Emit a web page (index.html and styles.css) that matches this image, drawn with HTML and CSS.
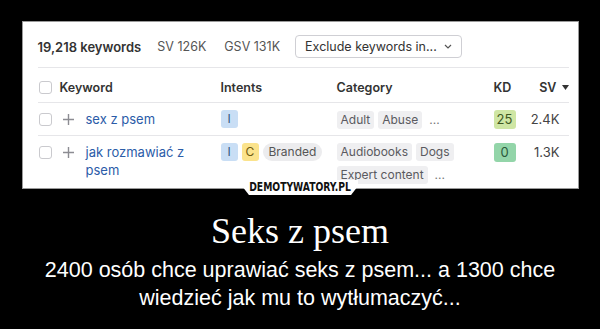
FILE: index.html
```html
<!DOCTYPE html>
<html lang="pl">
<head>
<meta charset="utf-8">
<title>Seks z psem</title>
<link rel="stylesheet" href="styles.css">
</head>
<body>
<div class="poster">
  <div class="picture">
    <div class="frame">
      <div class="toolbar">
        <span class="count">19,218 keywords</span>
        <span class="stat">SV 126K</span>
        <span class="stat">GSV 131K</span>
        <span class="select">Exclude keywords in...
          <svg class="chev" width="8" height="5" viewBox="0 0 8 5"><path d="M1 1l3 3 3-3" fill="none" stroke="#555" stroke-width="1.2"/></svg>
        </span>
      </div>
      <div class="table">
        <div class="row head">
          <span class="cb"></span>
          <span class="col-kw">Keyword</span>
          <span>Intents</span>
          <span>Category</span>
          <span>KD</span>
          <span class="col-sv">SV <svg width="7" height="5" viewBox="0 0 7 5"><path d="M0 0h7L3.5 5z" fill="#333"/></svg></span>
        </div>
        <div class="row">
          <span class="cb"></span>
          <span class="col-kw"><svg class="plus" width="11" height="11" viewBox="0 0 11 11"><path d="M5.5 0v11M0 5.5h11" stroke="#8c8c92" stroke-width="1.4"/></svg><a class="kw">sex z psem</a></span>
          <span class="tags"><b class="intent i">I</b></span>
          <span class="tags"><i class="chip">Adult</i><i class="chip">Abuse</i><i class="more">...</i></span>
          <span><b class="kd kd-mid">25</b></span>
          <span class="col-sv val">2.4K</span>
        </div>
        <div class="row">
          <span class="cb"></span>
          <span class="col-kw"><svg class="plus" width="11" height="11" viewBox="0 0 11 11"><path d="M5.5 0v11M0 5.5h11" stroke="#8c8c92" stroke-width="1.4"/></svg><a class="kw">jak rozmawiać z psem</a></span>
          <span class="tags"><b class="intent i">I</b><b class="intent c">C</b><i class="pill">Branded</i></span>
          <span class="tags"><i class="chip">Audiobooks</i><i class="chip">Dogs</i><i class="chip">Expert content</i><i class="more">...</i></span>
          <span><b class="kd kd-low">0</b></span>
          <span class="col-sv val">1.3K</span>
        </div>
      </div>
    </div>
    <div class="brand"><span class="brand-text">DEMOTYWATORY.PL</span></div>
  </div>
  <h1 class="title">Seks z psem</h1>
  <p class="sub">2400 osób chce uprawiać seks z psem... a 1300 chce wiedzieć jak mu to wytłumaczyć...</p>
</div>
</body>
</html>
```

FILE: styles.css
```css
* { box-sizing: border-box; }
html, body { margin: 0; padding: 0; background: #000; }
body { width: 600px; height: 329px; overflow: hidden; }

.poster {
  display: flex;
  flex-direction: column;
  align-items: center;
}

.picture {
  position: relative;
  margin-top: 21px;
  width: 557px;
  height: 168px;
}

.frame {
  width: 557px;
  height: 168px;
  background: #fff;
  border: 1px solid #9a9a9a;
  overflow: hidden;
  font-family: Inter, "Noto Sans", sans-serif;
  font-size: 12.5px;
  color: #333;
  padding: 0 9px 0 15px;
}

.toolbar {
  display: flex;
  align-items: center;
  height: 46px;
  padding-top: 4px;
  border-bottom: 1px solid #e6e6e9;
}
.count { font-weight: 600; color: #333; margin-right: 16px; font-size: 13px; }
.stat { color: #555; margin-right: 18px; font-size: 12.5px; }
.stat + .select { margin-left: -3px; }
.select {
  display: flex;
  align-items: center;
  gap: 7px;
  height: 23px;
  padding: 0 9px;
  border: 1px solid #cfcfd4;
  border-radius: 4px;
  font-size: 12.5px;
  color: #333;
}

.row {
  display: grid;
  grid-template-columns: 22px 161px 116px 157px 31px 44px;
  border-bottom: 1px solid #e6e6e9;
  padding: 7px 0 6px;
  align-items: start;
}
.row.head {
  padding: 12px 0 6px;
  font-weight: 600;
  line-height: 16px;
  color: #333;
}
.row.head .cb { margin-top: 1px; }
.row > span { line-height: 19px; }
.row.head > span { line-height: 16px; }

.cb {
  width: 13px;
  height: 13px;
  border: 1px solid #cacace;
  border-radius: 3px;
  margin-top: 3px;
  margin-left: 1px;
}

.col-kw { display: flex; align-items: flex-start; }
.plus { margin: 4px 12px 0 3px; flex: none; }
.kw { color: #2b5ca8; font-size: 13px; line-height: 18px; }

.tags { display: flex; flex-wrap: wrap; gap: 4px 4px; align-items: center; }
.intent {
  font-weight: 400;
  display: inline-block;
  width: 17px;
  height: 18px;
  line-height: 18px;
  text-align: center;
  border-radius: 3px;
  font-size: 12px;
}
.intent.i { background: #c9def5; color: #34527c; }
.intent.c { background: #fbe38c; color: #6f5a10; }
.pill {
  font-style: normal;
  background: #ececee;
  color: #555;
  border-radius: 9px;
  padding: 0 6px;
  height: 18px;
  line-height: 18px;
  font-size: 12px;
}
.chip {
  font-style: normal;
  background: #efeff1;
  color: #5a5a60;
  border-radius: 3px;
  padding: 0 4px;
  height: 18px;
  line-height: 18px;
  font-size: 12px;
}
.more { font-style: normal; color: #777; margin-left: 3px; font-size: 12px; }

.kd {
  font-weight: 400;
  display: inline-block;
  width: 22px;
  height: 19px;
  line-height: 19px;
  text-align: center;
  border-radius: 3px;
  font-size: 13px;
}
.kd-mid { background: #cfe6a4; color: #3e5722; }
.kd-low { background: #93d5a9; color: #2b5a3b; }

.col-sv { text-align: right; }
.col-sv svg { margin-left: 2px; vertical-align: 2px; }
.val { padding-right: 9px; font-size: 13px; color: #444; }

.brand {
  position: absolute;
  left: 50%;
  top: 159px;
  transform: translateX(-50%);
  width: 116px;
  height: 15px;
  background: #fff;
  clip-path: polygon(0 0, 100% 0, 100% 40%, 94% 100%, 6% 100%, 0 40%);
  display: flex;
  justify-content: center;
  align-items: flex-start;
}
.brand-text {
  display: inline-block;
  font-family: "DejaVu Sans Condensed", "DejaVu Sans", sans-serif;
  font-weight: bold;
  font-size: 12.5px;
  line-height: 14px;
  color: #111;
  white-space: nowrap;
  transform: scaleX(0.82);
}

.title {
  margin: 22px 0 0;
  font-family: "Liberation Serif", "Times New Roman", serif;
  font-weight: normal;
  font-size: 36px;
  line-height: 40px;
  color: #fff;
}
.sub {
  margin: 5px 0 0;
  width: 540px;
  font-family: "Liberation Sans", Arial, sans-serif;
  font-size: 21.5px;
  line-height: 28px;
  color: #fff;
  text-align: center;
}
```
